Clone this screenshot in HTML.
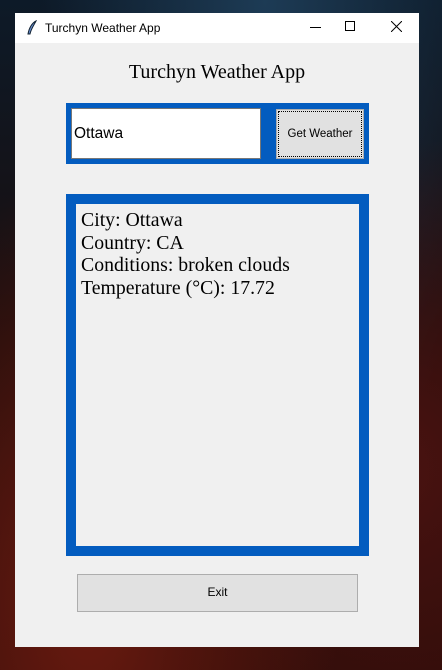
<!DOCTYPE html>
<html><head><meta charset="utf-8"><style>
*{margin:0;padding:0;box-sizing:border-box}
html,body{width:442px;height:670px;overflow:hidden}
body{position:relative;background:
radial-gradient(ellipse at 20% 90%,#6a1a10 0%,transparent 50%),
radial-gradient(ellipse at 90% 70%,#4a1210 0%,transparent 50%),
radial-gradient(ellipse at 60% 0%,#1d3b55 0%,transparent 60%),
linear-gradient(#0d1a28,#1a0d0c 50%,#2a0c08);font-family:"Liberation Sans",sans-serif}
.win{position:absolute;left:15px;top:13px;width:404px;height:634px;background:#f0f0f0}
.tb{position:absolute;left:0;top:0;width:404px;height:30px;background:#fff}
.tt{position:absolute;left:30px;top:8px;font-size:12px;color:#000}
.abs{position:absolute}
.serif{font-family:"Liberation Serif",serif;color:#000}
</style></head><body>
<div class="win">
<div class="tb">
<svg class="abs" style="left:11px;top:7px" width="12" height="16" viewBox="0 0 12 16"><path d="M10 1 C6 3 3 8 2 14 L4 14 C5 9 8 5 10 1Z" fill="#6a8fd0" stroke="#123" stroke-width="1"/></svg>
<div class="tt">Turchyn Weather App</div>
<div class="abs" style="left:295px;top:14px;width:11px;height:1px;background:#000"></div>
<div class="abs" style="left:330px;top:8px;width:10px;height:10px;border:1px solid #000"></div>
<svg class="abs" style="left:376px;top:8px" width="11" height="11"><path d="M0 0L11 11M11 0L0 11" stroke="#000" stroke-width="1"/></svg>
</div>
<div class="abs serif" style="left:0;width:404px;top:48px;text-align:center;font-size:20px">Turchyn Weather App</div>
<div class="abs" style="left:51px;top:90px;width:303px;height:61px;background:#035cbf"></div>
<div class="abs" style="left:56px;top:95px;width:190px;height:51px;background:#fff;border:1px solid #777"></div>
<div class="abs" style="left:59px;top:112px;font-size:15.5px;color:#000">Ottawa</div>
<div class="abs" style="left:261px;top:96px;width:88px;height:50px;background:#e1e1e1;border:1px solid #adadad;outline:1px dotted #000;outline-offset:-3px"></div>
<div class="abs" style="left:261px;top:115px;width:88px;text-align:center;font-size:11.5px;color:#000">Get Weather</div>
<div class="abs" style="left:51px;top:181px;width:303px;height:362px;border:10px solid #035cbf;background:#f0f0f0"></div>
<div class="abs serif" style="left:66px;top:196px;font-size:19.8px;line-height:22.5px">City: Ottawa<br>Country: CA<br>Conditions: broken clouds<br>Temperature (°C): 17.72</div>
<div class="abs" style="left:62px;top:561px;width:281px;height:38px;background:#e1e1e1;border:1px solid #adadad"></div>
<div class="abs" style="left:62px;top:572px;width:281px;text-align:center;font-size:12px;color:#000">Exit</div>
</div>
</body></html>
